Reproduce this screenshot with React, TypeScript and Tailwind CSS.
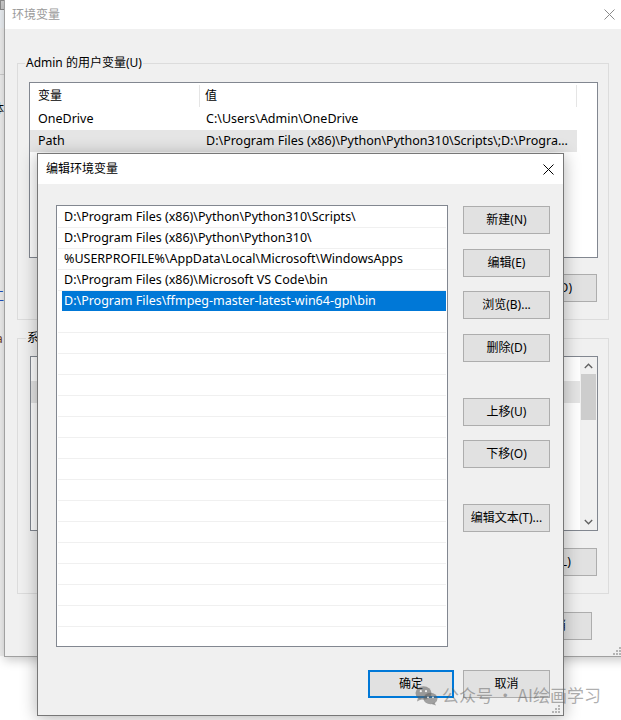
import React from "react";

const F = "font-['Noto_Sans','Noto_Sans_CJK_SC',sans-serif]";

function Btn({ children, className }: { children?: React.ReactNode; className: string }) {
  return (
    <div
      className={`flex items-center justify-center bg-[#e1e1e1] border border-[#adadad] text-[12px] text-black leading-none ${className}`}
    >
      {children}
    </div>
  );
}

function XIcon({ color }: { color: string }) {
  return (
    <svg width="11" height="11" viewBox="0 0 11 11">
      <path d="M0.5 0.5L10.5 10.5M10.5 0.5L0.5 10.5" stroke={color} strokeWidth="1" />
    </svg>
  );
}

function Grip() {
  const pts = [
    [6, 0],
    [3, 3],
    [6, 3],
    [0, 6],
    [3, 6],
    [6, 6],
  ];
  return (
    <svg width="8" height="8" viewBox="0 0 8 8">
      {pts.map(([x, y], i) => (
        <rect key={i} x={x} y={y} width="2" height="2" fill="#b4b4b4" />
      ))}
    </svg>
  );
}

function WeChat() {
  return (
    <svg width="23" height="21" viewBox="0 0 23 21">
      <g fill="rgba(95,95,95,0.55)">
        <ellipse cx="8.5" cy="8" rx="8" ry="6.8" />
        <path d="M3 12.5 L2 16.5 L7 14 Z" />
        <ellipse cx="15.5" cy="13.5" rx="7" ry="5.8" />
        <path d="M19.5 17.5 L21 20.5 L16.5 19 Z" />
      </g>
      <g fill="#f0f0f0">
        <circle cx="5.8" cy="6.2" r="1.1" />
        <circle cx="11" cy="6.2" r="1.1" />
        <circle cx="13" cy="12.3" r="0.9" />
        <circle cx="18" cy="12.3" r="0.9" />
      </g>
    </svg>
  );
}

const rows = [
  "D:\\Program Files (x86)\\Python\\Python310\\Scripts\\",
  "D:\\Program Files (x86)\\Python\\Python310\\",
  "%USERPROFILE%\\AppData\\Local\\Microsoft\\WindowsApps",
  "D:\\Program Files (x86)\\Microsoft VS Code\\bin",
  "D:\\Program Files\\ffmpeg-master-latest-win64-gpl\\bin",
];

export default function App() {
  const allRows = [...rows, ...Array(16).fill("")];
  return (
    <div className={`relative w-[621px] h-[720px] overflow-hidden bg-white ${F} text-[12px] text-black`}>
      {/* far-left window behind */}
      <div className="absolute left-0 top-0 w-[6px] h-[656px] bg-[#f0f0f0] flex flex-col">
        <div className="h-[10px] bg-[#c9c9c9] border border-[#8a8a8a]" />
        <div className="h-[18px] bg-[#eef2f6]" />
        <div className="h-[46px]" />
        <div className="h-[1px] bg-[#d0d0d0]" />
        <div className="mt-[28px] -ml-[8px] text-[12px] leading-none">体</div>
        <div className="mt-[176px] -ml-[8px] text-[12px] leading-none text-[#2050c0]">工</div>
        <div className="mt-[30px] -ml-[4px] text-[12px] leading-none text-[#704020]">a</div>
      </div>

      {/* background window 环境变量 */}
      <div className="absolute left-[4px] top-0 w-[632px] h-[657px] border-l border-b border-[#a0a0a0] bg-[#f0f0f0] shadow-[0_3px_10px_rgba(0,0,0,0.22)]">
        <div className="h-[29px] bg-white flex items-center justify-between pl-[7px] pr-[21px]">
          <span className="text-[#9a9a9a]">环境变量</span>
          <XIcon color="#8a8a8a" />
        </div>
        {/* user vars group */}
        <div className="relative ml-[12px] mt-[34px] w-[592px] h-[257px] border border-[#dcdcdc]">
          <span className="absolute left-[7px] -top-[9px] px-[1px] bg-[#f0f0f0] leading-[16px]">Admin 的用户变量(U)</span>
          <div className="ml-[11px] mt-[18px] w-[569px] h-[176px] border border-[#828790] bg-white flex flex-col">
            <div className="h-[25px] flex items-center">
              <div className="w-[170px] h-[22px] border-r border-[#e5e5e5] pl-[8px] flex items-center">变量</div>
              <div className="w-[377px] h-[22px] border-r border-[#e5e5e5] pl-[5px] flex items-center">值</div>
            </div>
            <div className="h-[22px] flex items-center text-[12.5px]">
              <div className="w-[171px] pl-[8px]">OneDrive</div>
              <div className="pl-[5px]">C:\Users\Admin\OneDrive</div>
            </div>
            <div className="h-[22px] w-[547px] flex items-center bg-[#e5e5e5] text-[12.5px]">
              <div className="w-[171px] pl-[8px]">Path</div>
              <div className="pl-[5px] whitespace-nowrap">D:\Program Files (x86)\Python\Python310\Scripts\;D:\Progra...</div>
            </div>
          </div>
          <div className="flex justify-end pr-[11px] mt-[16px]">
            <Btn className="w-[90px] h-[28px]">删除(D)</Btn>
          </div>
        </div>
        {/* system vars group */}
        <div className="relative ml-[12px] mt-[18px] w-[592px] h-[256px] border border-[#dcdcdc]">
          <span className="absolute left-[8px] -top-[9px] px-[1px] bg-[#f0f0f0] leading-[16px]">系统变量(S)</span>
          <div className="ml-[12px] mt-[17px] w-[568px] h-[175px] border border-[#828790] bg-white flex">
            <div className="flex-1 flex flex-col">
              <div className="h-[24px]" />
              <div className="h-[22px] bg-[#e5e5e5]" />
            </div>
            <div className="w-[17px] bg-[#f0f0f0] flex flex-col items-center">
              <div className="h-[17px] flex items-center justify-center">
                <svg width="9" height="6" viewBox="0 0 9 6">
                  <path d="M0.8 5L4.5 1.2L8.2 5" stroke="#606060" strokeWidth="1.3" fill="none" />
                </svg>
              </div>
              <div className="w-[15px] h-[46px] bg-[#cdcdcd]" />
              <div className="flex-1" />
              <div className="h-[17px] flex items-center justify-center">
                <svg width="9" height="6" viewBox="0 0 9 6">
                  <path d="M0.8 1L4.5 4.8L8.2 1" stroke="#606060" strokeWidth="1.3" fill="none" />
                </svg>
              </div>
            </div>
          </div>
          <div className="flex justify-end pr-[11px] mt-[17px]">
            <Btn className="w-[90px] h-[28px]">删除(L)</Btn>
          </div>
        </div>
        <div className="ml-[511px] mt-[18px]">
          <Btn className="w-[76px] h-[28px]">取消</Btn>
        </div>
        <div className="absolute left-[608px] top-[647px]">
          <Grip />
        </div>
      </div>

      {/* front dialog 编辑环境变量 */}
      <div className="absolute left-[37px] top-[153px] w-[527px] h-[563px] border border-[#777777] bg-[#f0f0f0] shadow-[0_2px_16px_rgba(0,0,0,0.3)] flex flex-col">
        <div className="h-[30px] bg-white flex items-center justify-between pl-[8px] pr-[9px]">
          <span>编辑环境变量</span>
          <XIcon color="#000" />
        </div>
        <div className="flex pl-[18px] pt-[21px]">
          <div className="w-[392px] h-[442px] border border-[#828790] bg-white pt-[1px] overflow-hidden">
            {allRows.map((r, i) => (
              <div
                key={i}
                className={`ml-[1px] mr-[1px] h-[21px] border-b ${i === 4 ? "border-white" : "border-[#f0f0f0]"} flex`}
              >
                <div
                  className={`ml-[4px] flex-1 h-[20px] flex items-center pl-[2px] whitespace-nowrap text-[12.5px] ${
                    i === 4 ? "bg-[#0078d7] text-white" : ""
                  }`}
                >
                  {r}
                </div>
              </div>
            ))}
          </div>
          <div className="ml-[15px] flex flex-col">
            <Btn className="mt-[1px] w-[87px] h-[28px]">新建(N)</Btn>
            <Btn className="mt-[15px] w-[87px] h-[28px]">编辑(E)</Btn>
            <Btn className="mt-[14px] w-[87px] h-[28px]">浏览(B)...</Btn>
            <Btn className="mt-[15px] w-[87px] h-[28px]">删除(D)</Btn>
            <Btn className="mt-[36px] w-[87px] h-[28px]">上移(U)</Btn>
            <Btn className="mt-[14px] w-[87px] h-[28px]">下移(O)</Btn>
            <Btn className="mt-[36px] w-[87px] h-[28px]">编辑文本(T)...</Btn>
          </div>
        </div>
        <div className="flex justify-end gap-[9px] pr-[13px] mt-[23px]">
          <div className="w-[86px] h-[28px] border-2 border-[#0078d7] bg-[#e1e1e1] flex items-center justify-center leading-none">
            确定
          </div>
          <Btn className="w-[87px] h-[28px]">取消</Btn>
        </div>
        <div className="absolute left-[514px] top-[551px]">
          <Grip />
        </div>
      </div>

      {/* watermark */}
      <div className="absolute left-[415px] top-[683px] flex items-center pointer-events-none">
        <WeChat />
        <span className="ml-[4px] text-[17px] leading-[24px] text-[rgba(95,95,95,0.5)] font-['Noto_Sans_CJK_SC',sans-serif]">
          公众号 · AI绘画学习
        </span>
      </div>
    </div>
  );
}
